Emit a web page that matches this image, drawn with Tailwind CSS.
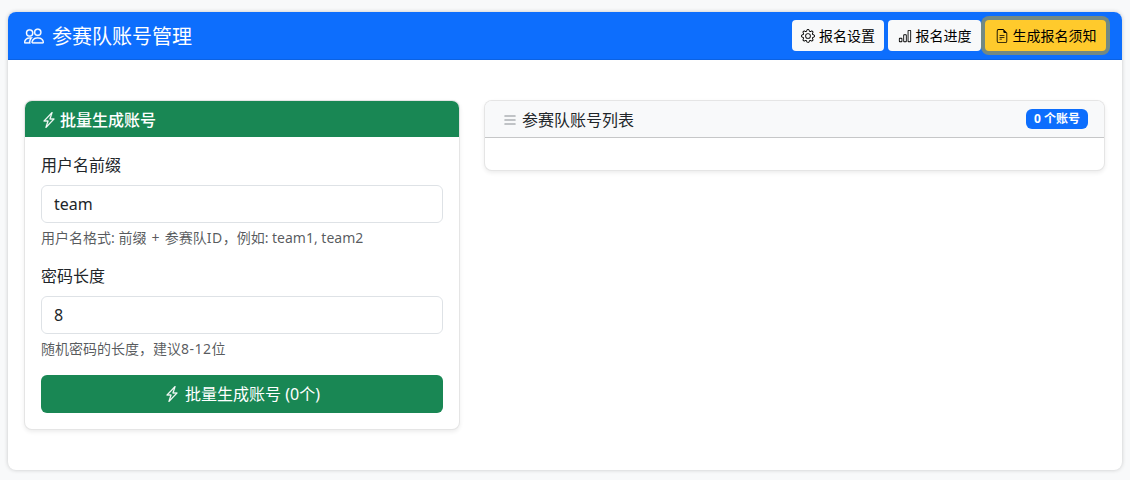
<!DOCTYPE html>
<html lang="zh-CN">
<head>
    <meta charset="UTF-8">
    <meta name="viewport" content="width=device-width, initial-scale=1.0">
    <title>参赛队账号管理</title>
    <script src="https://cdn.jsdelivr.net/npm/@tailwindcss/browser@4"></script>
</head>
<body class="bg-[#f8f9fa] h-[480px] overflow-hidden pt-3 px-2 text-[#212529] text-base leading-6 font-['Noto_Sans','Noto_Sans_CJK_SC',sans-serif]">

    <div class="h-[458px] bg-white rounded-lg shadow-[0_0_4px_rgba(0,0,0,0.2)] overflow-hidden">
        <!-- page header -->
        <div class="h-12 bg-[#0d6efd] border-b border-black/10 pl-4 pr-4 flex items-center justify-between text-white">
            <h5 class="flex items-center text-xl leading-6 font-normal">
                <svg class="w-5 h-5 mr-2" viewBox="0 0 16 16" fill="currentColor" stroke="currentColor" stroke-width="0.2"><path d="M15 14s1 0 1-1-1-4-5-4-5 3-5 4 1 1 1 1h8Zm-7.978-1A.261.261 0 0 1 7 12.996c.001-.264.167-1.03.76-1.72C8.312 10.629 9.282 10 11 10c1.717 0 2.687.63 3.24 1.276.593.69.758 1.457.76 1.72l-.008.002a.274.274 0 0 1-.014.002H7.022ZM11 7a2 2 0 1 0 0-4 2 2 0 0 0 0 4Zm3-2a3 3 0 1 1-6 0 3 3 0 0 1 6 0ZM6.936 9.28a5.88 5.88 0 0 0-1.23-.247A7.35 7.35 0 0 0 5 9c-4 0-5 3-5 4 0 .667.333 1 1 1h4.216A2.238 2.238 0 0 1 5 13c0-1.01.377-2.042 1.09-2.904.243-.294.526-.569.846-.816ZM4.92 10A5.493 5.493 0 0 0 4 13H1c0-.26.164-1.03.76-1.724.545-.636 1.492-1.256 3.16-1.275ZM1.5 5.5a3 3 0 1 1 6 0 3 3 0 0 1-6 0Zm3-2a2 2 0 1 0 0 4 2 2 0 0 0 0-4Z"/></svg>
                <span class="pt-0.5">参赛队账号管理</span>
            </h5>
            <div class="flex items-center gap-1">
                <button class="w-[92px] h-[31px] flex items-center justify-center bg-[#f8f9fa] text-black text-sm rounded">
                    <svg class="w-3.5 h-3.5 mr-1" viewBox="0 0 16 16" fill="currentColor"><path d="M8 4.754a3.246 3.246 0 1 0 0 6.492 3.246 3.246 0 0 0 0-6.492zM5.754 8a2.246 2.246 0 1 1 4.492 0 2.246 2.246 0 0 1-4.492 0z"/><path d="M9.796 1.343c-.527-1.79-3.065-1.79-3.592 0l-.094.319a.873.873 0 0 1-1.255.52l-.292-.16c-1.64-.892-3.433.902-2.54 2.541l.159.292a.873.873 0 0 1-.52 1.255l-.319.094c-1.79.527-1.79 3.065 0 3.592l.319.094a.873.873 0 0 1 .52 1.255l-.16.292c-.892 1.64.901 3.434 2.541 2.54l.292-.159a.873.873 0 0 1 1.255.52l.094.319c.527 1.79 3.065 1.79 3.592 0l.094-.319a.873.873 0 0 1 1.255-.52l.292.16c1.64.893 3.434-.902 2.54-2.541l-.159-.292a.873.873 0 0 1 .52-1.255l.319-.094c1.79-.527 1.79-3.065 0-3.592l-.319-.094a.873.873 0 0 1-.52-1.255l.16-.292c.893-1.64-.902-3.433-2.541-2.54l-.292.159a.873.873 0 0 1-1.255-.52l-.094-.319zm-2.633.283c.246-.835 1.428-.835 1.674 0l.094.319a1.873 1.873 0 0 0 2.693 1.115l.291-.16c.764-.415 1.6.42 1.184 1.185l-.159.292a1.873 1.873 0 0 0 1.116 2.692l.318.094c.835.246.835 1.428 0 1.674l-.319.094a1.873 1.873 0 0 0-1.115 2.693l.16.291c.415.764-.42 1.6-1.185 1.184l-.291-.159a1.873 1.873 0 0 0-2.693 1.116l-.094.318c-.246.835-1.428.835-1.674 0l-.094-.319a1.873 1.873 0 0 0-2.692-1.115l-.292.16c-.764.415-1.6-.42-1.184-1.185l.159-.291A1.873 1.873 0 0 0 1.945 8.93l-.319-.094c-.835-.246-.835-1.428 0-1.674l.319-.094A1.873 1.873 0 0 0 3.06 4.377l-.16-.292c-.415-.764.42-1.6 1.185-1.184l.292.159a1.873 1.873 0 0 0 2.692-1.115l.094-.319z"/></svg>
                    报名设置
                </button>
                <button class="w-[93px] h-[31px] flex items-center justify-center bg-[#f8f9fa] text-black text-sm rounded">
                    <svg class="w-3.5 h-3.5 mr-1" viewBox="0 0 16 16" fill="currentColor"><path d="M4 11H2v3h2v-3zm5-4H7v7h2V7zm5-5v12h-2V2h2zm-2-1a1 1 0 0 0-1 1v12a1 1 0 0 0 1 1h2a1 1 0 0 0 1-1V2a1 1 0 0 0-1-1h-2zM6 7a1 1 0 0 1 1-1h2a1 1 0 0 1 1 1v7a1 1 0 0 1-1 1H7a1 1 0 0 1-1-1V7zm-5 4a1 1 0 0 1 1-1h2a1 1 0 0 1 1 1v3a1 1 0 0 1-1 1H2a1 1 0 0 1-1-1v-3z"/></svg>
                    报名进度
                </button>
                <button class="w-[121px] h-[31px] flex items-center justify-center bg-[#ffca2c] text-black text-sm rounded shadow-[0_0_0_4px_#738982]">
                    <svg class="w-3.5 h-3.5 mr-1" viewBox="0 0 16 16" fill="currentColor"><path d="M5.5 7a.5.5 0 0 0 0 1h5a.5.5 0 0 0 0-1h-5zM5 9.5a.5.5 0 0 1 .5-.5h5a.5.5 0 0 1 0 1h-5a.5.5 0 0 1-.5-.5zm0 2a.5.5 0 0 1 .5-.5h2a.5.5 0 0 1 0 1h-2a.5.5 0 0 1-.5-.5z"/><path d="M9.5 0H4a2 2 0 0 0-2 2v12a2 2 0 0 0 2 2h8a2 2 0 0 0 2-2V4.5L9.5 0zm0 1v2A1.5 1.5 0 0 0 11 4.5h2V14a1 1 0 0 1-1 1H4a1 1 0 0 1-1-1V2a1 1 0 0 1 1-1h5.5z"/></svg>
                    生成报名须知
                </button>
            </div>
        </div>

        <div class="pt-10 pl-4 pr-[17px] flex items-start gap-6">
            <!-- generate form -->
            <div class="w-[436px] bg-white border border-black/10 rounded-lg shadow-[0_2px_4px_rgba(0,0,0,0.075)] overflow-hidden">
                <div class="h-9 bg-[#198754] text-white pt-0.5 px-4 flex items-center font-medium">
                    <svg class="w-4 h-4 mr-[3px]" viewBox="0 0 16 16" fill="currentColor" stroke="currentColor" stroke-width="0.3"><path d="M11.251.068a.5.5 0 0 1 .227.58L9.677 6.5H13a.5.5 0 0 1 .364.843l-8 8.5a.5.5 0 0 1-.842-.49L6.323 9.5H3a.5.5 0 0 1-.364-.843l8-8.5a.5.5 0 0 1 .615-.09zM4.157 8.5H7a.5.5 0 0 1 .478.647L6.11 13.59l5.732-6.09H9a.5.5 0 0 1-.478-.647L9.89 2.41 4.157 8.5z"/></svg>
                    批量生成账号
                </div>
                <div class="p-4">
                    <div class="mb-4">
                        <label class="block mb-2">用户名前缀</label>
                        <input type="text" value="team" class="block w-full h-[38px] px-3 border border-[#dee2e6] rounded-md">
                        <div class="mt-1 text-sm leading-[21px] text-[#212529]/75">用户名格式: <span class="[word-spacing:1.5px]">前缀 + 参赛队<span class="tracking-[0.5px]">ID</span></span>，例如: team1, team2</div>
                    </div>
                    <div class="mb-4">
                        <label class="block mb-2">密码长度</label>
                        <input type="text" value="8" class="block w-full h-[38px] px-3 border border-[#dee2e6] rounded-md">
                        <div class="mt-1 text-sm leading-[21px] text-[#212529]/75">随机密码的长度，建议<span class="tracking-[0.5px]">8-12</span>位</div>
                    </div>
                    <button class="w-full h-[38px] flex items-center justify-center bg-[#198754] text-white rounded-md">
                        <svg class="w-4 h-4 mr-[5px]" viewBox="0 0 16 16" fill="currentColor" stroke="currentColor" stroke-width="0.3"><path d="M11.251.068a.5.5 0 0 1 .227.58L9.677 6.5H13a.5.5 0 0 1 .364.843l-8 8.5a.5.5 0 0 1-.842-.49L6.323 9.5H3a.5.5 0 0 1-.364-.843l8-8.5a.5.5 0 0 1 .615-.09zM4.157 8.5H7a.5.5 0 0 1 .478.647L6.11 13.59l5.732-6.09H9a.5.5 0 0 1-.478-.647L9.89 2.41 4.157 8.5z"/></svg>
                        批量生成账号 (0个)
                    </button>
                </div>
            </div>

            <!-- account list -->
            <div class="flex-1 bg-white border border-black/10 rounded-lg shadow-[0_2px_4px_rgba(0,0,0,0.075)] overflow-hidden">
                <div class="h-[37px] bg-[#f8f9fa] border-b border-black/20 pl-[17px] pr-4 flex items-center justify-between">
                    <div class="flex items-center pt-0.5">
                        <svg class="w-4 h-4 mr-1 text-[#a8acb0]" viewBox="0 0 16 16" fill="currentColor" stroke="currentColor" stroke-width="0.4"><path d="M2.5 12a.5.5 0 0 1 .5-.5h10a.5.5 0 0 1 0 1H3a.5.5 0 0 1-.5-.5zm0-4a.5.5 0 0 1 .5-.5h10a.5.5 0 0 1 0 1H3a.5.5 0 0 1-.5-.5zm0-4a.5.5 0 0 1 .5-.5h10a.5.5 0 0 1 0 1H3a.5.5 0 0 1-.5-.5z"/></svg>
                        参赛队账号列表
                    </div>
                    <span class="h-5 px-2 flex items-center bg-[#0d6efd] text-white text-xs font-bold rounded-md">0 个账号</span>
                </div>
                <div class="h-8"></div>
            </div>
        </div>
    </div>

</body>
</html>
